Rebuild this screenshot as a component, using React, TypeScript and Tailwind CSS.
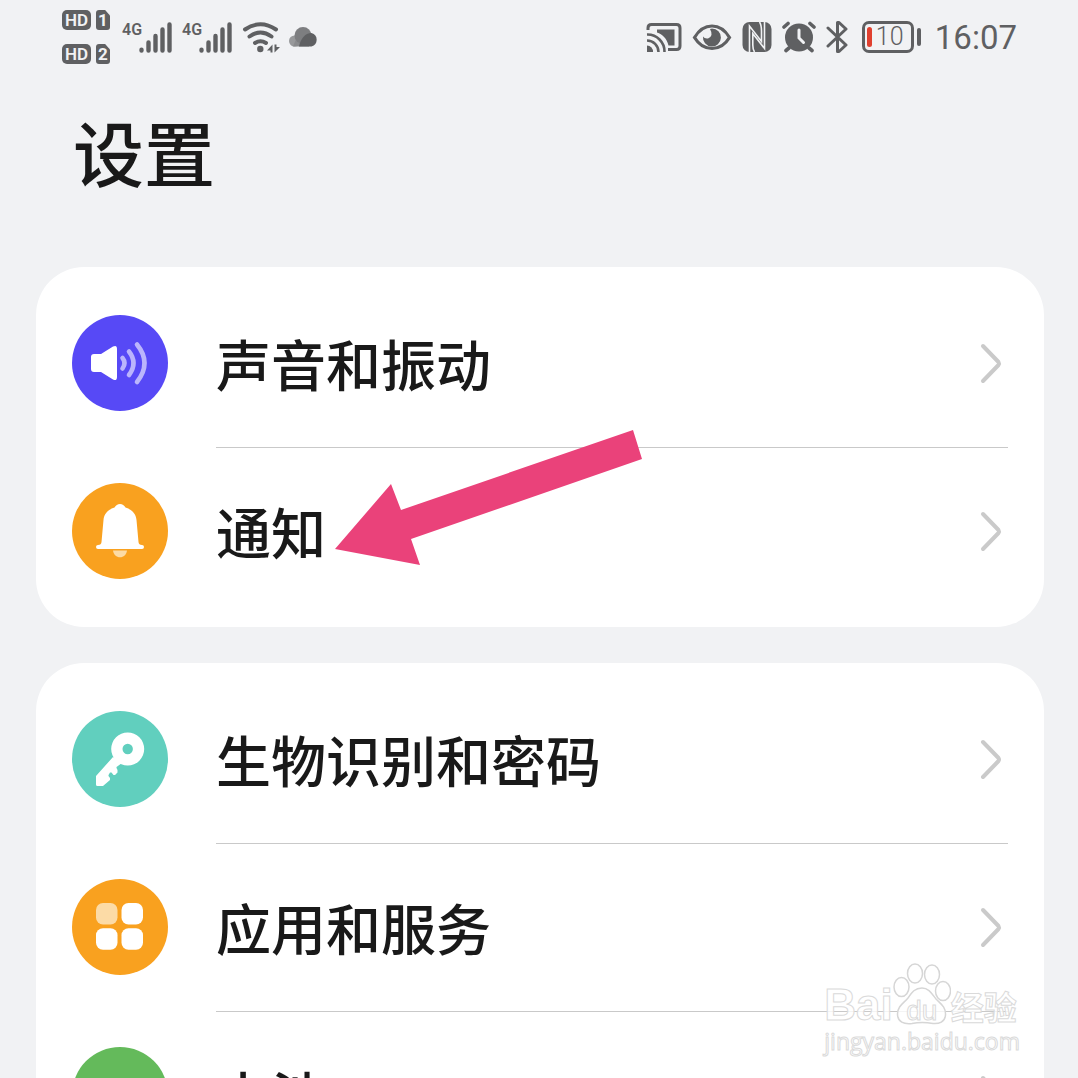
import React from 'react';

type SettingItem = {
	id: string;
	label: string;
	color: string;
	icon: React.ReactNode;
};

const SoundIcon = () => (
	<svg viewBox="0 0 96 96" className="h-full w-full" fill="none" aria-hidden="true">
		<path
			d="M22 39H29L41 31.500Q45 29.500 45 34V62Q45 66.500 41 64.500L29 57H22Q19 57 19 54V42Q19 39 22 39Z"
			fill="#fff"
		/>
		<g stroke="#bbb5fc" strokeWidth="4.600" strokeLinecap="round">
			<path d="M50.500 43Q54.500 48 50.500 53.500" />
			<path d="M57 36.500Q66 48 57 60" />
			<path d="M65 29.500Q80 48 65 67" />
		</g>
	</svg>
);

const BellIcon = () => (
	<svg viewBox="0 0 96 96" className="h-full w-full" aria-hidden="true">
		<path
			d="M48 21C50.500 21 52 22.500 53.500 24.500C60 26.500 64 31 64.500 37L66.500 59Q66.700 62 70 62A2 2 0 0 1 70 66H26A2 2 0 0 1 26 62Q29.300 62 29.500 59L31.500 37C32 31 36 26.500 42.500 24.500C44 22.500 45.500 21 48 21Z"
			fill="#fff"
		/>
		<path d="M41 67.500H55C54.500 71.500 51.500 74.300 48 74.300C44.500 74.300 41.500 71.500 41 67.500Z" fill="#fcdba6" />
	</svg>
);

const KeyIcon = () => (
	<svg viewBox="0 0 96 96" className="h-full w-full" fill="#fff" aria-hidden="true">
		<path
			fillRule="evenodd"
			d="M55.700 21.500A16.500 16.500 0 1 1 55.700 54.500A16.500 16.500 0 1 1 55.700 21.500ZM55.700 32.800A5.200 5.200 0 1 0 55.700 43.200A5.200 5.200 0 1 0 55.700 32.800Z"
		/>
		<path d="M41 46L24 65V73.500Q24 75 25.500 75H31L38 69V67L36.500 65V64L38 61.500H39.500L41.500 64H43L45.500 61.500V59L44.500 57V56L50 52Z" />
	</svg>
);

const AppsIcon = () => (
	<svg viewBox="0 0 96 96" className="h-full w-full" fill="#fff" aria-hidden="true">
		<rect x="24" y="24" width="21.500" height="21.500" rx="7" fill="#fcdba6" />
		<rect x="49.500" y="24" width="21.500" height="21.500" rx="7" />
		<rect x="24" y="49.300" width="21.500" height="21.500" rx="7" />
		<rect x="49.500" y="49.300" width="21.500" height="21.500" rx="7" />
	</svg>
);

const BatteryIcon = () => (
	<svg viewBox="0 0 96 96" className="h-full w-full" fill="#fff" aria-hidden="true">
		<rect x="42" y="36" width="12" height="5" rx="2" />
		<rect x="35" y="40" width="26" height="36" rx="6" />
	</svg>
);

const groups: SettingItem[][] = [
	[
		{ id: 'sound', label: '声音和振动', color: 'bg-[#5749f6]', icon: <SoundIcon /> },
		{ id: 'notification', label: '通知', color: 'bg-[#f9a11f]', icon: <BellIcon /> },
	],
	[
		{ id: 'security', label: '生物识别和密码', color: 'bg-[#61cfbe]', icon: <KeyIcon /> },
		{ id: 'apps', label: '应用和服务', color: 'bg-[#f9a11f]', icon: <AppsIcon /> },
		{ id: 'battery', label: '电池', color: 'bg-[#64ba5b]', icon: <BatteryIcon /> },
	],
];

const HdBadge = ({ sim }: { sim: number }) => (
	<div className="flex h-5 gap-[5px] text-[#f1f2f4]">
		<span className="flex w-[29px] items-center justify-center rounded-[5px] bg-[#5f6062] text-[17px] leading-5 font-semibold">
			HD
		</span>
		<span className="flex w-[14px] items-center justify-center rounded-[3px] bg-[#5f6062] text-[17px] leading-5 font-bold [clip-path:polygon(0_0,65%_0,100%_28%,100%_100%,0_100%)]">
			{sim}
		</span>
	</div>
);

const Signal = () => (
	<div className="flex">
		<span className="w-[17px] text-[16px] leading-4 font-semibold">4G</span>
		<svg
			viewBox="0 0 34 31"
			className="h-[31px] w-[34px]"
			stroke="currentColor"
			strokeWidth="4.400"
			strokeLinecap="round"
			aria-hidden="true"
		>
			<path d="M2.500 27.700V28.500M9.500 20.500V28.500M16.500 14V28.500M23.500 7.500V28.500M30.500 2.500V28.500" />
		</svg>
	</div>
);

const WifiIcon = () => (
	<svg viewBox="0 0 38 32" className="h-8 w-[38px]" fill="none" aria-hidden="true">
		<g stroke="currentColor" strokeWidth="4" strokeLinecap="round">
			<path d="M3 8.500Q18.500 -2 34 8.500" />
			<path d="M7.500 15.500Q18.500 7.500 29.500 15.500" />
			<path d="M13 22Q18.500 18.500 24 22" />
		</g>
		<circle cx="18.300" cy="28" r="3.200" fill="currentColor" />
		<path d="M25 29.500L30.500 23.500V31.500H28.500V29.500ZM32.500 23.500H34.500V26H38L32.500 31.500Z" fill="currentColor" />
	</svg>
);

const CloudIcon = () => (
	<svg viewBox="0 0 30 20" className="h-5 w-[30px]" aria-hidden="true">
		<circle cx="5.500" cy="14" r="5.500" fill="#98999b" />
		<path d="M4 19.500L8 10H20V19.500Z" fill="#8a8b8d" />
		<circle cx="14" cy="8.500" r="8.500" fill="#7d7e80" />
		<path d="M10 19.500C11.500 12 16 6 22.500 6A7 7 0 0 1 22.500 19.500Z" fill="#5f6062" />
	</svg>
);

const CastIcon = () => (
	<svg viewBox="0 0 36 32" className="h-8 w-9" fill="none" stroke="currentColor" strokeWidth="3" aria-hidden="true">
		<path d="M2 9V7Q2 3.500 5.500 3.500H30.500Q34 3.500 34 7V25Q34 28.500 30.500 28.500H22" />
		<path d="M11 8.500H28.500V24.500H22.500C20.500 17 16.500 13.500 11 11.500Z" fill="currentColor" stroke="none" />
		<path d="M1 13.500A17 17 0 0 1 18.500 31M1 19.500A11.500 11.500 0 0 1 12.500 31" strokeWidth="2.600" />
		<path d="M1 24.500A6 6 0 0 1 7 31H1Z" fill="currentColor" stroke="none" />
	</svg>
);

const EyeIcon = () => (
	<svg viewBox="0 0 40 32" className="h-8 w-10" fill="none" aria-hidden="true">
		<path
			d="M2.500 16.500C7 9 13 5 20 5C27 5 33 9 37.500 16.500C33 24 27 27.500 20 27.500C13 27.500 7 24 2.500 16.500Z"
			stroke="currentColor"
			strokeWidth="3.200"
		/>
		<path d="M20 7.500A9 9 0 1 1 11 15.500Q12.500 18 16 17.500Q22 15 18 8Z" fill="currentColor" />
	</svg>
);

const NfcIcon = () => (
	<svg viewBox="0 0 30 32" className="h-8 w-[30px]" fill="none" aria-hidden="true">
		<rect x="0.500" y="1" width="29" height="30" rx="7" fill="currentColor" />
		<g stroke="#f1f2f4" strokeWidth="1.600">
			<path d="M7.500 31V5L19.500 20.500V10Q19.500 4 17.500 1" />
			<path d="M22.500 1V27.500L10.800 12.500V24Q10.800 28.500 12.500 31" />
		</g>
	</svg>
);

const AlarmIcon = () => (
	<svg viewBox="0 0 34 32" className="h-8 w-[34px]" fill="none" strokeLinecap="round" aria-hidden="true">
		<circle cx="17" cy="16.500" r="14" fill="currentColor" />
		<path d="M2 6L6 2.500M32 6L28 2.500M7 27L4 29.500M27 27L30 29.500" stroke="currentColor" strokeWidth="3.600" />
		<path d="M17 9V17L21.500 21.500" stroke="#f1f2f4" strokeWidth="3" />
	</svg>
);

const BluetoothIcon = () => (
	<svg
		viewBox="0 0 22 34"
		className="h-[34px] w-[22px]"
		fill="none"
		stroke="currentColor"
		strokeWidth="3"
		strokeLinejoin="round"
		strokeLinecap="round"
		aria-hidden="true"
	>
		<path d="M2 8L20 25L13 31.500H11.500V2.500H13L20 9L2 26" />
	</svg>
);

const StatusBar = () => (
	<header className="flex h-[74px] items-center justify-between pr-[61px] pl-[62px] font-['Roboto',sans-serif] text-[#5f6062]">
		<div className="flex items-center gap-[9px]">
			<div className="flex flex-col gap-[14px] pr-[3px]">
				<HdBadge sim={1} />
				<HdBadge sim={2} />
			</div>
			<Signal />
			<Signal />
			<WifiIcon />
			<CloudIcon />
		</div>
		<div className="flex items-center gap-[10px]">
			<CastIcon />
			<EyeIcon />
			<NfcIcon />
			<AlarmIcon />
			<BluetoothIcon />
			<div className="flex items-center gap-[3px] pl-1">
				<div className="flex h-8 w-[52px] items-center gap-1 rounded-[7px] border-[3px] border-current pl-[2px]">
					<span className="h-5 w-[5px] rounded-full bg-[#e0402f]" />
					<span className="text-[25px] leading-7 font-light">10</span>
				</div>
				<span className="h-[18px] w-1 rounded-full bg-current" />
			</div>
			<time className="pt-[2px] pl-1 text-[33px] leading-9">16:07</time>
		</div>
	</header>
);

const Chevron = () => (
	<svg
		viewBox="0 0 36 48"
		className="h-12 w-9 shrink-0"
		fill="none"
		stroke="#cacaca"
		strokeWidth="4"
		strokeLinecap="round"
		strokeLinejoin="round"
		aria-hidden="true"
	>
		<path d="M11 6L26.500 22Q27.500 23.500 26.500 25L11 41" />
	</svg>
);

// marker pointing at the notification row
const Arrow = () => (
	<svg
		viewBox="0 0 308 136"
		className="pointer-events-none absolute -top-[18px] left-[299px] z-10 h-[136px] w-[308px]"
		aria-hidden="true"
	>
		<path d="M0 120L56 55L66 81L298 1L307 30L76 110L85 136Z" fill="#ea427a" />
	</svg>
);

const SettingRow = ({ item, divided }: { item: SettingItem; divided: boolean }) => (
	<li className="relative">
		<button type="button" className="flex h-[168px] w-full items-center gap-12 px-9 text-left">
			<span className={`h-24 w-24 shrink-0 rounded-full ${item.color}`}>{item.icon}</span>
			<span
				className={`flex h-full flex-1 items-center justify-between border-t ${
					divided ? 'border-[#c9c9c9]' : 'border-transparent'
				}`}
			>
				<span className="pb-1 text-[55px] leading-[80px] font-medium">{item.label}</span>
				<Chevron />
			</span>
		</button>
		{item.id === 'notification' && <Arrow />}
	</li>
);

const Watermark = () => (
	<div className="pointer-events-none absolute right-[58px] bottom-[21px] text-white/80 [-webkit-text-stroke:1px_#dadada]">
		<div className="flex items-end">
			<span className="font-['Liberation_Sans',sans-serif] text-[44px] leading-[40px] font-bold">Bai</span>
			<div className="relative h-[62px] w-[58px]">
				<svg
					viewBox="0 0 58 62"
					className="h-full w-full"
					fill="#fff"
					fillOpacity="0.8"
					stroke="#d6d6d6"
					strokeWidth="1.500"
					aria-hidden="true"
				>
					<ellipse cx="8.500" cy="24" rx="7.500" ry="9.500" />
					<ellipse cx="22" cy="10.500" rx="7.500" ry="9.500" />
					<ellipse cx="39" cy="11.500" rx="7.500" ry="9.500" />
					<ellipse cx="50" cy="28" rx="7.500" ry="9.500" />
					<path d="M29 25C36 25 39 31 43 36C48 41 53 44 52.500 52C52 59 46 61 40 60.500C32 59 26 59 19 60.500C11 61.500 4.500 59 4.500 51C4.500 43 11 40 15 35C19 29 22 25 29 25Z" />
				</svg>
				<span className="absolute inset-x-0 bottom-0 text-center font-['Liberation_Sans',sans-serif] text-[28px] leading-7">
					du
				</span>
			</div>
			<span className="text-[33px] leading-[38px] font-bold">经验</span>
		</div>
		<div className="font-['Open_Sans',sans-serif] text-[23px] leading-8">jingyan.baidu.com</div>
	</div>
);

const App = () => {
	return (
		<div className="relative h-screen overflow-hidden bg-[#f1f2f4] font-['Noto_Sans_CJK_SC',sans-serif] text-[#191919]">
			<StatusBar />
			<h1 className="px-[73px] pt-6 text-[71px] leading-[104px] font-medium">设置</h1>
			<main className="flex flex-col gap-9 pt-[65px] pr-[34px] pl-9">
				{groups.map((items) => (
					<ul key={items[0].id} className="rounded-[48px] bg-white py-3">
						{items.map((item, i) => (
							<SettingRow key={item.id} item={item} divided={i > 0} />
						))}
					</ul>
				))}
			</main>
			<Watermark />
		</div>
	);
};

export default App;
